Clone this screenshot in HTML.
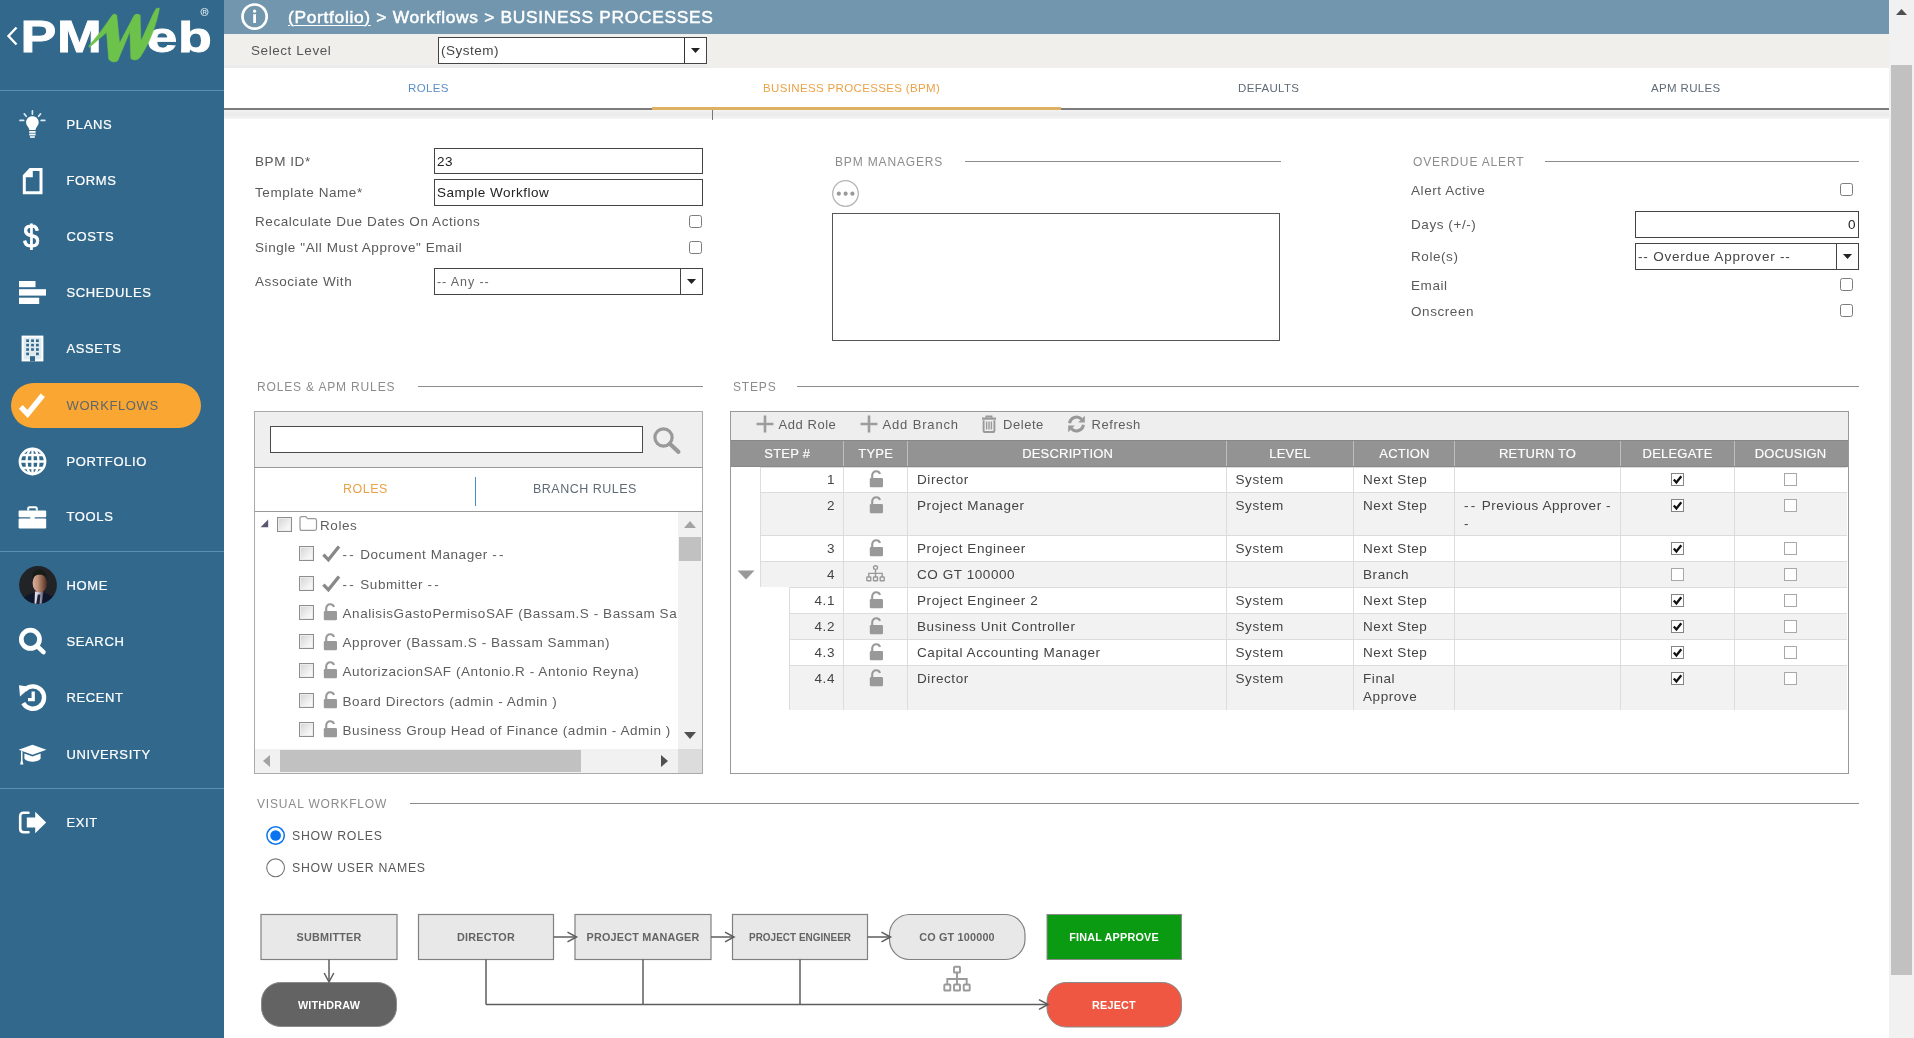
<!DOCTYPE html>
<html lang="en">
<head>
<meta charset="utf-8">
<title>PMWeb - Business Processes</title>
<style>
*{box-sizing:border-box;margin:0;padding:0}
html,body{width:1914px;height:1038px;overflow:hidden;background:#fff}
body{position:relative;will-change:transform;opacity:.9999;font-family:"Liberation Sans",Arial,sans-serif;font-size:13px;color:#555;letter-spacing:.55px}
.abs{position:absolute}
/* ---------- sidebar ---------- */
#side{position:absolute;left:0;top:0;width:224px;height:1038px;background:#31688b}
#side .sep{position:absolute;left:0;width:224px;height:1px;background:#5c8fb0}
#side .it{position:absolute;left:66.5px;color:#fff;font-size:13px;letter-spacing:.62px;-webkit-text-stroke:.22px currentColor;line-height:16px;white-space:nowrap}
#side svg{position:absolute;overflow:visible}
#pill{position:absolute;left:11px;top:383px;width:190px;height:45px;border-radius:23px;background:#f9a632}
/* ---------- top ---------- */
#hdr{position:absolute;left:224px;top:0;width:1665px;height:34px;background:#7196ad}
#crumb{position:absolute;left:64px;top:7px;font-size:15.8px;line-height:22px;color:#fff;letter-spacing:.62px;white-space:nowrap;-webkit-text-stroke:.45px #fff;transform:scaleX(1.1);transform-origin:0 50%}
#crumb u{text-decoration-thickness:1px;text-underline-offset:2px}
#lvl{position:absolute;left:224px;top:34px;width:1665px;height:34px;background:#f1efec}
#tabs{position:absolute;left:224px;top:68px;width:1665px;height:42px;background:#fff;border-bottom:2px solid #7d7d7d}
#tabs span{position:absolute;top:13px;font-size:11.5px;letter-spacing:.35px;line-height:14px;white-space:nowrap}
#strip{position:absolute;left:224px;top:110px;width:1665px;height:9px;background:linear-gradient(#f3f3f3,#eaeaea 45%,#f4f4f4)}
#vsb{position:absolute;left:1889px;top:0;width:25px;height:1038px;background:#f1f1f1}
#vsb i{position:absolute;left:2px;top:65px;width:21px;height:910px;background:#c1c1c1}
.lbl{position:absolute;white-space:nowrap;line-height:16px;font-size:13.5px;letter-spacing:.57px;color:#5a5a5a}
.inp{position:absolute;border:1px solid #444;background:#fff;height:27px;font-size:13.5px;letter-spacing:.5px;color:#222;line-height:25px;padding-left:2px;white-space:nowrap}
.cb{position:absolute;width:13px;height:13px;border:1px solid #7c7c7c;border-radius:2.5px;background:#fff}
.sec{position:absolute;font-size:12px;letter-spacing:.84px;color:#8c8c8c;white-space:nowrap;line-height:14px}
.hl{position:absolute;height:1px;background:#8c8c8c}
.ptab{font-size:12.5px;letter-spacing:.5px;line-height:16px;white-space:nowrap}
.tcb{position:absolute;width:15px;height:15px;border:1px solid #8e8e8e;background:linear-gradient(135deg,#d4d4d4 0%,#f6f6f6 75%);box-shadow:inset 0 0 0 1px #ececec}
.tl{font-size:13.5px;letter-spacing:.57px;color:#5e5e5e;line-height:16px;white-space:nowrap}
.dd{letter-spacing:2.2px}
.tb{font-size:13px;letter-spacing:.55px;color:#5e5e5e;line-height:16px;white-space:nowrap}
.th{font-size:13px;letter-spacing:.2px;color:#fff;line-height:16px;text-align:center;white-space:nowrap;-webkit-text-stroke:.15px #fff}
.td{font-size:13.5px;letter-spacing:.57px;color:#444;line-height:18px;white-space:nowrap}
.gcb{width:13px;height:13px;border:1px solid #a8a8a8;background:#fff}
.dd2{letter-spacing:2.2px}
.rl{font-size:12.3px;letter-spacing:.72px;color:#585858;line-height:16px;white-space:nowrap}
</style>
</head>
<body>

<!-- ================= SIDEBAR ================= -->
<div id="side">
  <div class="sep" style="top:90px"></div>
  <div class="sep" style="top:551px"></div>
  <div class="sep" style="top:788px"></div>
  <div id="pill"></div>
  <div class="it" style="top:117px">PLANS</div>
  <div class="it" style="top:173px">FORMS</div>
  <div class="it" style="top:229px">COSTS</div>
  <div class="it" style="top:285px">SCHEDULES</div>
  <div class="it" style="top:341px">ASSETS</div>
  <div class="it" style="top:398px;color:#5d666d;-webkit-text-stroke:0">WORKFLOWS</div>
  <div class="it" style="top:454px">PORTFOLIO</div>
  <div class="it" style="top:509px">TOOLS</div>
  <div class="it" style="top:578px">HOME</div>
  <div class="it" style="top:634px">SEARCH</div>
  <div class="it" style="top:690px">RECENT</div>
  <div class="it" style="top:747px">UNIVERSITY</div>
  <div class="it" style="top:815px">EXIT</div>
<!--SI0-->
  <!-- logo -->
  <svg style="left:0;top:0" width="224" height="90" viewBox="0 0 224 90">
    <path d="M16.500 27.500 8.500 36l8 8.500" fill="none" stroke="#fff" stroke-width="2.400"/>
    <text x="20.500" y="52" font-family="Liberation Sans, Arial, sans-serif" font-weight="bold" font-size="43.500" fill="#fff" stroke="#fff" stroke-width=".8" textLength="82" lengthAdjust="spacingAndGlyphs">PM</text>
    <text x="146.500" y="52" font-family="Liberation Sans, Arial, sans-serif" font-weight="bold" font-size="42" fill="#fff" stroke="#fff" stroke-width=".9" textLength="66" lengthAdjust="spacingAndGlyphs">eb</text>
    <path d="M89.400 47.400 88.800 45.900Q100.800 32.500 112.200 15.300Q114.500 12.800 116.800 15.300L119.600 43 134.200 15.300Q137.300 12.800 140.200 15.300L141 41 153.300 13.500 156.200 8.400 159.500 8.100C157 23 150 43 140 57.500Q135.500 62 130.800 58.500L129.900 31.500 117.800 60.700Q112.400 64 108.700 59.300L106.600 32.400z" fill="#6cc24a" stroke="#6cc24a" stroke-width=".5" stroke-linejoin="round"/>
    <circle cx="204.500" cy="12" r="3.600" fill="none" stroke="#cfe0ea" stroke-width="1"/>
    <text x="202.600" y="14.200" font-family="Liberation Sans, Arial, sans-serif" font-weight="bold" font-size="6" fill="#cfe0ea">R</text>
  </svg>
  <!-- plans : bulb -->
  <svg style="left:19px;top:110px" width="27" height="29" viewBox="0 0 27 29" fill="#fff">
    <path d="M13.4 6.2c-3.7 0-6.3 2.7-6.3 6 0 2.2 1.1 3.6 2 4.8.7 1 1.1 1.8 1.2 3h6.2c.1-1.2.5-2 1.2-3 .9-1.2 2-2.6 2-4.8 0-3.3-2.600-6-6.300-6z"/>
    <rect x="10.200" y="21" width="6.400" height="1.800"/><rect x="10.200" y="23.600" width="6.400" height="1.800"/><rect x="11" y="26.200" width="4.800" height="1.600"/>
    <g stroke="#dcebf5" stroke-width="1.700" stroke-linecap="round"><path d="M13.4 .9v3.200M5.200 3.800l2 2.500M21.600 3.800l-2 2.500M1 10.400h3.600M22.200 10.400h3.600"/></g>
  </svg>
  <!-- forms : document -->
  <svg style="left:22px;top:168px" width="22" height="27" viewBox="0 0 22 27"><path fill-rule="evenodd" fill="#fff" d="M.8 7.300 7.600 0H20.500V26.300H.8zM10.800 3V9.200H3.800V23.300H17.500V3z"/></svg>
  <!-- costs : dollar -->
  <svg style="left:20px;top:218px" width="24" height="38" viewBox="0 0 24 38"><text x="0" y="0" transform="translate(11.600 29.300) scale(.9 1)" text-anchor="middle" font-family="Liberation Sans, Arial, sans-serif" font-size="32" fill="#fff" stroke="#fff" stroke-width=".9">$</text></svg>
  <!-- schedules : bars -->
  <svg style="left:19px;top:281px" width="27" height="23" viewBox="0 0 27 23" fill="#fff"><rect x="0" y="0" width="16.500" height="6.200"/><rect x="0" y="8.200" width="27" height="6.400"/><rect x="0" y="16.700" width="20.200" height="6.300"/></svg>
  <!-- assets : building -->
  <svg style="left:21px;top:335px" width="23" height="27" viewBox="0 0 23 27">
    <path d="M.6.600h21.800v25.800H.6z" fill="#fff"/><path d="M2.600 2.600h17.800v21.800H2.600z" fill="#dfe9f0"/>
    <g fill="#31688b"><rect x="5.2" y="4.4" width="2.800" height="2.600"/><rect x="10.1" y="4.4" width="2.800" height="2.600"/><rect x="15" y="4.4" width="2.800" height="2.600"/><rect x="5.2" y="8.8" width="2.800" height="2.600"/><rect x="10.1" y="8.8" width="2.800" height="2.600"/><rect x="15" y="8.8" width="2.800" height="2.600"/><rect x="5.2" y="13.2" width="2.800" height="2.600"/><rect x="10.1" y="13.2" width="2.800" height="2.600"/><rect x="15" y="13.2" width="2.800" height="2.600"/><rect x="5.2" y="17.6" width="2.800" height="2.600"/><rect x="15" y="17.6" width="2.800" height="2.600"/><rect x="9" y="21.200" width="5" height="5.200"/></g>
  </svg>
  <!-- workflows : check -->
  <svg style="left:18px;top:392px" width="28" height="27" viewBox="0 0 28 27"><path d="M2.800 14.800 9.600 22 24.800 3.200" fill="none" stroke="#fff" stroke-width="5.400" stroke-linejoin="miter"/></svg>
  <!-- portfolio : globe -->
  <svg style="left:18px;top:447px" width="29" height="29" viewBox="0 0 29 29" fill="none" stroke="#fff" stroke-width="2.300"><circle cx="14.500" cy="14.500" r="12.600" stroke-width="2.600"/><ellipse cx="14.500" cy="14.500" rx="6" ry="12.700"/><path d="M14.500 1.800v25.400M1.800 14.500h25.400M3.600 8h21.800M3.600 21h21.800"/></svg>
  <!-- tools : briefcase -->
  <svg style="left:18px;top:506px" width="29" height="23" viewBox="0 0 29 23"><path d="M10.200 4.500V2.600q0-1.400 1.400-1.400h5.800q1.400 0 1.400 1.400V4.500" fill="none" stroke="#fff" stroke-width="2"/><rect x=".6" y="4.400" width="27.600" height="6.800" rx="1" fill="#fff"/><rect x=".6" y="12.400" width="27.600" height="10" rx="1" fill="#fff"/><rect x="12.300" y="10.400" width="4.400" height="3.600" fill="#fff"/></svg>
  <!-- home : avatar -->
  <svg style="left:19px;top:566px" width="38" height="38" viewBox="0 0 38 38">
    <defs><clipPath id="avc"><circle cx="19" cy="19" r="18.900"/></clipPath>
    <linearGradient id="avf" x1="0" x2="1" y1="0" y2="0"><stop offset="0" stop-color="#d8b09a"/><stop offset=".35" stop-color="#c0917b"/><stop offset=".7" stop-color="#875947"/><stop offset="1" stop-color="#472c25"/></linearGradient><linearGradient id="avs" x1="0" x2="1" y1="0" y2="0"><stop offset="0" stop-color="#e4dfec"/><stop offset=".45" stop-color="#cfc9dc"/><stop offset="1" stop-color="#4d4b63"/></linearGradient>
    <filter id="avb" x="-10%" y="-10%" width="120%" height="120%"><feGaussianBlur stdDeviation=".7"/></filter></defs>
    <g clip-path="url(#avc)"><rect width="38" height="38" fill="#222327"/>
      <g filter="url(#avb)">
      <path d="M1 38C2 31 9 28.500 16 26.500L19 38zM21.500 38 24.500 26.500C31 28.500 36 31 37 38z" fill="#11152b"/>
      <path d="M16 25.500h8.500L22.800 38H15.500z" fill="url(#avs)"/>
      <path d="M18.800 28.500h2.600l-.8 9.500h-3.400z" fill="#1c2038"/>
      <ellipse cx="20.800" cy="17" rx="7.200" ry="9.400" fill="url(#avf)"/>
      <path d="M13.500 14.500C12.500 7 16 3.500 20.500 3.500S29 7 27.500 15C27 10.500 24.500 8.800 20.500 8.800S14.200 10.500 13.500 14.500z" fill="#171b19"/>
      </g>
    </g>
  </svg>
  <!-- search -->
  <svg style="left:18px;top:627px" width="29" height="29" viewBox="0 0 29 29"><circle cx="12.400" cy="12.300" r="9.100" fill="none" stroke="#fff" stroke-width="4.700"/><path d="M19.400 19.300 25.500 25.100" stroke="#fff" stroke-width="4.600" stroke-linecap="round"/></svg>
  <!-- recent -->
  <svg style="left:18px;top:682px" width="30" height="30" viewBox="0 0 30 30"><path d="M6.600 8A11.200 11.200 0 1 1 5.200 21.200" fill="none" stroke="#fff" stroke-width="4.400"/><path d="M1 3.200 12.800 5 2 14.400z" fill="#fff"/><path d="M15.200 9.600v8h-5.200" fill="none" stroke="#fff" stroke-width="3.300"/></svg>
  <!-- university -->
  <svg style="left:18px;top:744px" width="29" height="22" viewBox="0 0 29 22" fill="#fff"><path d="M14.500 .8 28.400 5.800 14.500 10.800 .6 5.800z"/><path d="M6.400 9.600v5.200c2 2.200 5 3 8.100 3s6.100-.8 8.100-3V9.600l-8.100 3z"/><path d="M3 7.200h1.500v9.300l.9 4H2.100l.9-4z"/></svg>
  <!-- exit -->
  <svg style="left:18px;top:810px" width="29" height="25" viewBox="0 0 29 25"><path d="M10.500 2.800H5.600Q2.200 2.800 2.200 6.200v12.600q0 3.400 3.400 3.400h4.900" fill="none" stroke="#fff" stroke-width="2.600" stroke-linecap="round"/><path d="M8.800 7.600h8.400V1.800L28.200 12.500 17.200 23.200v-5.800H8.800z" fill="#fff"/></svg>
<!--SI1-->
</div>

<!-- ================= HEADER ================= -->
<div id="hdr">
  <svg class="abs" style="left:16px;top:2px" width="29" height="29" viewBox="0 0 29 29"><circle cx="14.600" cy="14.600" r="12.100" fill="none" stroke="#fff" stroke-width="2.700"/><circle cx="14.600" cy="9.200" r="1.600" fill="#fff"/><rect x="13.200" y="12.200" width="2.800" height="8.800" fill="#fff"/></svg>
  <div id="crumb"><u>(Portfolio)</u> &gt; Workflows &gt; BUSINESS PROCESSES</div>
</div>
<div id="lvl">
  <div class="abs" style="left:0;top:30.500px;width:485px;height:3.500px;background:#ececec"></div>
  <div class="lbl" style="left:27px;top:9px;font-size:13.5px;color:#555">Select Level</div>
  <div class="inp" style="left:214px;top:3px;width:269px;height:27px;color:#444">(System)</div>
  <div class="abs" style="left:460px;top:4px;width:1px;height:25px;background:#333"></div>
  <svg class="abs" style="left:467px;top:14px" width="10" height="6"><path d="M0 0h9L4.5 5z" fill="#222"/></svg>
</div>
<div id="tabs">
  <span style="left:184px;color:#5b8fc9">ROLES</span>
  <span style="left:539px;color:#eba246">BUSINESS PROCESSES (BPM)</span>
  <span style="left:1014px;color:#5f6b76">DEFAULTS</span>
  <span style="left:1427px;color:#5f6b76">APM RULES</span>
  <div class="abs" style="left:428px;top:39px;width:409px;height:3px;background:#deb062"></div>
</div>
<div id="strip"><div class="abs" style="left:488px;top:0;width:1px;height:10px;background:#777"></div></div>
<div id="vsb"><i></i>
  <svg class="abs" style="left:7px;top:9px" width="11" height="6"><path d="M0 6h11L5.500 0z" fill="#505050"/></svg>
</div>

<!-- ================= FORM ================= -->
<div id="form">
  <div class="lbl" style="left:255px;top:154px">BPM ID*</div>
  <div class="inp" style="left:434px;top:148px;width:269px;height:26px">23</div>
  <div class="lbl" style="left:255px;top:185px">Template Name*</div>
  <div class="inp" style="left:434px;top:179px;width:269px;height:27px">Sample Workflow</div>
  <div class="lbl" style="left:255px;top:214px">Recalculate Due Dates On Actions</div>
  <div class="cb" style="left:689px;top:215px"></div>
  <div class="lbl" style="left:255px;top:240px">Single "All Must Approve" Email</div>
  <div class="cb" style="left:689px;top:241px"></div>
  <div class="lbl" style="left:255px;top:274px">Associate With</div>
  <div class="inp" style="left:434px;top:268px;width:269px;height:27px;font-size:12.500px;letter-spacing:.9px;color:#666;line-height:27px">-- Any --</div>
  <div class="abs" style="left:680px;top:269px;width:1px;height:25px;background:#444"></div>
  <svg class="abs" style="left:687px;top:279px" width="10" height="6"><path d="M0 0h9L4.500 5z" fill="#222"/></svg>

  <div class="sec" style="left:835px;top:155px">BPM MANAGERS</div>
  <div class="hl" style="left:965px;top:161px;width:316px"></div>
  <svg class="abs" style="left:831px;top:179px" width="29" height="29" viewBox="0 0 29 29"><circle cx="14.500" cy="14.500" r="12.800" fill="#fff" stroke="#b5b5b5" stroke-width="1.300"/><circle cx="7.800" cy="14.700" r="2.100" fill="#999"/><circle cx="14.600" cy="14.700" r="2.100" fill="#999"/><circle cx="21.400" cy="14.700" r="2.100" fill="#999"/></svg>
  <div class="abs" style="left:832px;top:213px;width:448px;height:128px;border:1px solid #555;background:#fff"></div>

  <div class="sec" style="left:1413px;top:155px">OVERDUE ALERT</div>
  <div class="hl" style="left:1545px;top:161px;width:314px"></div>
  <div class="lbl" style="left:1411px;top:183px">Alert Active</div>
  <div class="cb" style="left:1840px;top:183px"></div>
  <div class="lbl" style="left:1411px;top:217px">Days (+/-)</div>
  <div class="inp" style="left:1635px;top:211px;width:224px;height:27px;text-align:right;padding-right:2px">0</div>
  <div class="lbl" style="left:1411px;top:249px">Role(s)</div>
  <div class="inp" style="left:1635px;top:243px;width:224px;height:27px;color:#444;letter-spacing:.8px">-- Overdue Approver --</div>
  <div class="abs" style="left:1836px;top:244px;width:1px;height:25px;background:#444"></div>
  <svg class="abs" style="left:1843px;top:254px" width="10" height="6"><path d="M0 0h9L4.500 5z" fill="#222"/></svg>
  <div class="lbl" style="left:1411px;top:278px">Email</div>
  <div class="cb" style="left:1840px;top:278px"></div>
  <div class="lbl" style="left:1411px;top:304px">Onscreen</div>
  <div class="cb" style="left:1840px;top:304px"></div>

  <div class="sec" style="left:257px;top:380px">ROLES &amp; APM RULES</div>
  <div class="hl" style="left:418px;top:386px;width:285px"></div>
  <div class="sec" style="left:733px;top:380px">STEPS</div>
  <div class="hl" style="left:797px;top:386px;width:1062px"></div>
</div>
<!-- ================= ROLES PANEL ================= -->
<div id="rp" class="abs" style="left:254px;top:411px;width:449px;height:363px;border:1px solid #aaa;background:#fff">
 <div class="abs" style="left:0;top:0;width:447px;height:56px;background:#efefef;border-bottom:1px solid #999"></div>
 <div class="abs" style="left:15px;top:14px;width:373px;height:27px;border:1px solid #4a4a4a;background:#fff"></div>
 <svg class="abs" style="left:397px;top:14px" width="30" height="28" viewBox="0 0 30 28"><circle cx="11.500" cy="11.500" r="8.600" fill="none" stroke="#999" stroke-width="3.200"/><path d="M17.800 17.800 26.300 25.800" stroke="#999" stroke-width="4.200" stroke-linecap="round"/></svg>
 <div class="abs" style="left:0;top:99px;width:447px;height:1px;background:#999"></div>
 <div class="abs ptab" style="left:88px;top:69px;color:#eba246">ROLES</div>
 <div class="abs" style="left:220px;top:65px;width:1px;height:29px;background:#4a90c2"></div>
 <div class="abs ptab" style="left:278px;top:69px;color:#5f6b76">BRANCH RULES</div>
 <div id="tree" class="abs" style="left:0;top:100px;width:423px;height:237px;overflow:hidden">
  <svg class="abs" style="left:5px;top:7px" width="9" height="9"><path d="M8.200 .6v7.600H.6z" fill="#5a5672"/></svg>
  <div class="tcb" style="left:22px;top:5px"></div>
  <svg class="abs" style="left:44px;top:3px" width="19" height="17" viewBox="0 0 19 16" preserveAspectRatio="none"><path d="M1 3.200q0-1.700 1.700-1.700h4.200l1.600 2h7.300q1.700 0 1.700 1.700v7.600q0 1.700-1.700 1.700H2.700q-1.700 0-1.700-1.700z" fill="#fff" stroke="#999" stroke-width="1.200"/></svg>
  <div class="abs tl" style="left:65px;top:6px">Roles</div>
  <div class="tcb" style="left:44px;top:34px"></div>
  <svg class="abs" style="left:67px;top:32px" width="19" height="19" viewBox="0 0 19 19"><path d="M1.400 10.600 6.400 15.800 17 2.400" fill="none" stroke="#888" stroke-width="3.300"/></svg>
  <div class="abs tl" style="left:87.5px;top:35px"><span class="dd">--</span> Document Manager <span class="dd">--</span></div>
  <div class="tcb" style="left:44px;top:64px"></div>
  <svg class="abs" style="left:67px;top:62px" width="19" height="19" viewBox="0 0 19 19"><path d="M1.400 10.600 6.400 15.800 17 2.400" fill="none" stroke="#888" stroke-width="3.300"/></svg>
  <div class="abs tl" style="left:87.5px;top:65px"><span class="dd">--</span> Submitter <span class="dd">--</span></div>
  <div class="tcb" style="left:44px;top:93px"></div>
  <svg class="abs" style="left:68px;top:91px" width="15" height="18" viewBox="0 0 15 18"><path d="M3.200 8.200V5.300C3.200 2.900 4.900 1.300 7.200 1.300c1.900 0 3.300 1 3.800 2.700" fill="none" stroke="#999" stroke-width="2.100"/><rect x=".8" y="8" width="13.200" height="9.200" rx="1.200" fill="#999"/></svg>
  <div class="abs tl" style="left:87.5px;top:94px">AnalisisGastoPermisoSAF (Bassam.S - Bassam Samman)</div>
  <div class="tcb" style="left:44px;top:122px"></div>
  <svg class="abs" style="left:68px;top:121px" width="15" height="18" viewBox="0 0 15 18"><path d="M3.200 8.200V5.300C3.200 2.900 4.900 1.300 7.200 1.300c1.900 0 3.300 1 3.800 2.700" fill="none" stroke="#999" stroke-width="2.100"/><rect x=".8" y="8" width="13.200" height="9.200" rx="1.200" fill="#999"/></svg>
  <div class="abs tl" style="left:87.5px;top:123px">Approver (Bassam.S - Bassam Samman)</div>
  <div class="tcb" style="left:44px;top:151px"></div>
  <svg class="abs" style="left:68px;top:149px" width="15" height="18" viewBox="0 0 15 18"><path d="M3.200 8.200V5.300C3.200 2.900 4.900 1.300 7.200 1.300c1.900 0 3.300 1 3.800 2.700" fill="none" stroke="#999" stroke-width="2.100"/><rect x=".8" y="8" width="13.200" height="9.200" rx="1.200" fill="#999"/></svg>
  <div class="abs tl" style="left:87.5px;top:152px">AutorizacionSAF (Antonio.R - Antonio Reyna)</div>
  <div class="tcb" style="left:44px;top:181px"></div>
  <svg class="abs" style="left:68px;top:179px" width="15" height="18" viewBox="0 0 15 18"><path d="M3.200 8.200V5.300C3.200 2.900 4.900 1.300 7.200 1.300c1.900 0 3.300 1 3.800 2.700" fill="none" stroke="#999" stroke-width="2.100"/><rect x=".8" y="8" width="13.200" height="9.200" rx="1.200" fill="#999"/></svg>
  <div class="abs tl" style="left:87.5px;top:182px">Board Directors (admin - Admin )</div>
  <div class="tcb" style="left:44px;top:210px"></div>
  <svg class="abs" style="left:68px;top:208px" width="15" height="18" viewBox="0 0 15 18"><path d="M3.200 8.200V5.300C3.200 2.900 4.900 1.300 7.200 1.300c1.900 0 3.300 1 3.800 2.700" fill="none" stroke="#999" stroke-width="2.100"/><rect x=".8" y="8" width="13.200" height="9.200" rx="1.200" fill="#999"/></svg>
  <div class="abs tl" style="left:87.5px;top:211px">Business Group Head of Finance (admin - Admin )</div>
 </div>
 <div class="abs" style="left:423px;top:100px;width:24px;height:237px;background:#f1f1f1"><div class="abs" style="left:1px;top:25px;width:22px;height:24px;background:#c1c1c1"></div><svg class="abs" style="left:6px;top:9px" width="12" height="7"><path d="M0 7h12L6 0z" fill="#a3a3a3"/></svg><svg class="abs" style="left:6px;top:220px" width="12" height="7"><path d="M0 0h12L6 7z" fill="#505050"/></svg></div>
 <div class="abs" style="left:0;top:337px;width:447px;height:24px;background:#f1f1f1"><div class="abs" style="left:25px;top:1px;width:301px;height:22px;background:#c1c1c1"></div><svg class="abs" style="left:8px;top:6px" width="7" height="12"><path d="M7 0v12L0 6z" fill="#a3a3a3"/></svg><svg class="abs" style="left:406px;top:6px" width="7" height="12"><path d="M0 0v12L7 6z" fill="#505050"/></svg><div class="abs" style="left:423px;top:0;width:24px;height:24px;background:#dcdcdc"></div></div>
</div>
<!-- ================= STEPS PANEL ================= -->
<div id="sp" class="abs" style="left:730px;top:411px;width:1119px;height:363px;border:1px solid #999;background:#fff">
 <div class="abs" style="left:0;top:0;width:1117px;height:29px;background:#eee"></div>
 <svg class="abs" style="left:25px;top:3px" width="18" height="18" viewBox="0 0 18 18"><path d="M9 .5v17M.5 9h17" stroke="#9c9c9c" stroke-width="2.600"/></svg><div class="abs tb" style="left:47.5px;top:5px">Add Role</div>
 <svg class="abs" style="left:129px;top:3px" width="18" height="18" viewBox="0 0 18 18"><path d="M9 .5v17M.5 9h17" stroke="#9c9c9c" stroke-width="2.600"/></svg><div class="abs tb" style="left:151.5px;top:5px;letter-spacing:.85px">Add Branch</div>
 <svg class="abs" style="left:250px;top:3px" width="16" height="18" viewBox="0 0 16 18" fill="none" stroke="#999"><path d="M1 3.600h14" stroke-width="2.200"/><path d="M5.400 3V1.400h5.200V3" stroke-width="1.700"/><path d="M2.600 5.200v10.200q0 1.600 1.600 1.600h7.600q1.600 0 1.600-1.600V5.200" stroke-width="1.900"/><path d="M5.600 6.600v8M8 6.600v8M10.400 6.600v8" stroke-width="1.400"/></svg><div class="abs tb" style="left:272px;top:5px">Delete</div>
 <svg class="abs" style="left:336px;top:3px" width="19" height="18" viewBox="0 0 19 18"><path d="M2.600 8.200A7 7 0 0 1 14.600 4.200" fill="none" stroke="#999" stroke-width="3.100"/><path d="M17.800 .8v6.600h-6.600z" fill="#999"/><path d="M16.400 9.800A7 7 0 0 1 4.400 13.800" fill="none" stroke="#999" stroke-width="3.100"/><path d="M1.200 17.200v-6.600h6.600z" fill="#999"/></svg><div class="abs tb" style="left:360.5px;top:5px">Refresh</div>
 <div class="abs" style="left:0;top:28px;width:1117px;height:27px;background:#939393;border-top:1px solid #888;border-bottom:1px solid #888"></div>
 <div class="abs" style="left:112px;top:29px;width:1px;height:25px;background:#bdbdbd"></div>
 <div class="abs" style="left:176px;top:29px;width:1px;height:25px;background:#bdbdbd"></div>
 <div class="abs" style="left:495px;top:29px;width:1px;height:25px;background:#bdbdbd"></div>
 <div class="abs" style="left:622px;top:29px;width:1px;height:25px;background:#bdbdbd"></div>
 <div class="abs" style="left:723px;top:29px;width:1px;height:25px;background:#bdbdbd"></div>
 <div class="abs" style="left:889px;top:29px;width:1px;height:25px;background:#bdbdbd"></div>
 <div class="abs" style="left:1003px;top:29px;width:1px;height:25px;background:#bdbdbd"></div>
 <div class="abs th" style="left:-43.799999999999955px;top:34px;width:200px">STEP #</div>
 <div class="abs th" style="left:44.700000000000045px;top:34px;width:200px">TYPE</div>
 <div class="abs th" style="left:236.70000000000005px;top:34px;width:200px">DESCRIPTION</div>
 <div class="abs th" style="left:459px;top:34px;width:200px">LEVEL</div>
 <div class="abs th" style="left:573.5px;top:34px;width:200px">ACTION</div>
 <div class="abs th" style="left:706.5999999999999px;top:34px;width:200px">RETURN TO</div>
 <div class="abs th" style="left:846.5999999999999px;top:34px;width:200px">DELEGATE</div>
 <div class="abs th" style="left:959.5999999999999px;top:34px;width:200px">DOCUSIGN</div>
 <div class="abs" style="left:29px;top:55px;width:1087px;height:25px;background:#fff;border-top:1px solid #dcdcdc;border-left:1px solid #dcdcdc"></div>
 <div class="abs" style="left:112px;top:55px;width:1px;height:25px;background:#dcdcdc"></div>
 <div class="abs" style="left:176px;top:55px;width:1px;height:25px;background:#dcdcdc"></div>
 <div class="abs" style="left:495px;top:55px;width:1px;height:25px;background:#dcdcdc"></div>
 <div class="abs" style="left:622px;top:55px;width:1px;height:25px;background:#dcdcdc"></div>
 <div class="abs" style="left:723px;top:55px;width:1px;height:25px;background:#dcdcdc"></div>
 <div class="abs" style="left:889px;top:55px;width:1px;height:25px;background:#dcdcdc"></div>
 <div class="abs" style="left:1003px;top:55px;width:1px;height:25px;background:#dcdcdc"></div>
 <div class="abs td" style="left:4px;top:59px;width:100px;text-align:right">1</div>
 <svg class="abs" style="left:138px;top:58px" width="15" height="18" viewBox="0 0 15 18"><path d="M3.200 8.200V5.300C3.200 2.900 4.900 1.300 7.200 1.300c1.900 0 3.300 1 3.800 2.700" fill="none" stroke="#999" stroke-width="2.100"/><rect x=".8" y="8" width="13.200" height="9.200" rx="1.200" fill="#999"/></svg>
 <div class="abs td" style="left:186px;top:59px">Director</div>
 <div class="abs td" style="left:504.5px;top:59px">System</div>
 <div class="abs td" style="left:632px;top:59px">Next Step</div>
 <svg class="abs" style="left:940px;top:61px" width="13" height="13" viewBox="0 0 13 13"><rect x=".5" y=".5" width="12" height="12" fill="#fff" stroke="#858585"/><path d="M2.800 6.500 5.400 9.400 10.300 3.200" fill="none" stroke="#111" stroke-width="2.300"/></svg>
 <div class="abs gcb" style="left:1053px;top:61px"></div>
 <div class="abs" style="left:29px;top:80px;width:1087px;height:43px;background:#f2f2f2;border-top:1px solid #dcdcdc;border-left:1px solid #dcdcdc"></div>
 <div class="abs" style="left:112px;top:80px;width:1px;height:43px;background:#dcdcdc"></div>
 <div class="abs" style="left:176px;top:80px;width:1px;height:43px;background:#dcdcdc"></div>
 <div class="abs" style="left:495px;top:80px;width:1px;height:43px;background:#dcdcdc"></div>
 <div class="abs" style="left:622px;top:80px;width:1px;height:43px;background:#dcdcdc"></div>
 <div class="abs" style="left:723px;top:80px;width:1px;height:43px;background:#dcdcdc"></div>
 <div class="abs" style="left:889px;top:80px;width:1px;height:43px;background:#dcdcdc"></div>
 <div class="abs" style="left:1003px;top:80px;width:1px;height:43px;background:#dcdcdc"></div>
 <div class="abs td" style="left:4px;top:85px;width:100px;text-align:right">2</div>
 <svg class="abs" style="left:138px;top:84px" width="15" height="18" viewBox="0 0 15 18"><path d="M3.200 8.200V5.300C3.200 2.900 4.900 1.300 7.200 1.300c1.900 0 3.300 1 3.800 2.700" fill="none" stroke="#999" stroke-width="2.100"/><rect x=".8" y="8" width="13.200" height="9.200" rx="1.200" fill="#999"/></svg>
 <div class="abs td" style="left:186px;top:85px">Project Manager</div>
 <div class="abs td" style="left:504.5px;top:85px">System</div>
 <div class="abs td" style="left:632px;top:85px">Next Step</div>
 <div class="abs td" style="left:733px;top:85px;width:152px;white-space:normal"><span class="dd2">--</span> Previous Approver <span class="dd2">--</span></div>
 <svg class="abs" style="left:940px;top:87px" width="13" height="13" viewBox="0 0 13 13"><rect x=".5" y=".5" width="12" height="12" fill="#fff" stroke="#858585"/><path d="M2.800 6.500 5.400 9.400 10.300 3.200" fill="none" stroke="#111" stroke-width="2.300"/></svg>
 <div class="abs gcb" style="left:1053px;top:87px"></div>
 <div class="abs" style="left:29px;top:123px;width:1087px;height:26px;background:#fff;border-top:1px solid #dcdcdc;border-left:1px solid #dcdcdc"></div>
 <div class="abs" style="left:112px;top:123px;width:1px;height:26px;background:#dcdcdc"></div>
 <div class="abs" style="left:176px;top:123px;width:1px;height:26px;background:#dcdcdc"></div>
 <div class="abs" style="left:495px;top:123px;width:1px;height:26px;background:#dcdcdc"></div>
 <div class="abs" style="left:622px;top:123px;width:1px;height:26px;background:#dcdcdc"></div>
 <div class="abs" style="left:723px;top:123px;width:1px;height:26px;background:#dcdcdc"></div>
 <div class="abs" style="left:889px;top:123px;width:1px;height:26px;background:#dcdcdc"></div>
 <div class="abs" style="left:1003px;top:123px;width:1px;height:26px;background:#dcdcdc"></div>
 <div class="abs td" style="left:4px;top:128px;width:100px;text-align:right">3</div>
 <svg class="abs" style="left:138px;top:127px" width="15" height="18" viewBox="0 0 15 18"><path d="M3.200 8.200V5.300C3.200 2.900 4.900 1.300 7.200 1.300c1.900 0 3.300 1 3.800 2.700" fill="none" stroke="#999" stroke-width="2.100"/><rect x=".8" y="8" width="13.200" height="9.200" rx="1.200" fill="#999"/></svg>
 <div class="abs td" style="left:186px;top:128px">Project Engineer</div>
 <div class="abs td" style="left:504.5px;top:128px">System</div>
 <div class="abs td" style="left:632px;top:128px">Next Step</div>
 <svg class="abs" style="left:940px;top:130px" width="13" height="13" viewBox="0 0 13 13"><rect x=".5" y=".5" width="12" height="12" fill="#fff" stroke="#858585"/><path d="M2.800 6.500 5.400 9.400 10.300 3.200" fill="none" stroke="#111" stroke-width="2.300"/></svg>
 <div class="abs gcb" style="left:1053px;top:130px"></div>
 <div class="abs" style="left:29px;top:149px;width:1087px;height:26px;background:#f2f2f2;border-top:1px solid #dcdcdc;border-left:1px solid #dcdcdc"></div>
 <div class="abs" style="left:112px;top:149px;width:1px;height:26px;background:#dcdcdc"></div>
 <div class="abs" style="left:176px;top:149px;width:1px;height:26px;background:#dcdcdc"></div>
 <div class="abs" style="left:495px;top:149px;width:1px;height:26px;background:#dcdcdc"></div>
 <div class="abs" style="left:622px;top:149px;width:1px;height:26px;background:#dcdcdc"></div>
 <div class="abs" style="left:723px;top:149px;width:1px;height:26px;background:#dcdcdc"></div>
 <div class="abs" style="left:889px;top:149px;width:1px;height:26px;background:#dcdcdc"></div>
 <div class="abs" style="left:1003px;top:149px;width:1px;height:26px;background:#dcdcdc"></div>
 <div class="abs td" style="left:4px;top:154px;width:100px;text-align:right">4</div>
 <svg class="abs" style="left:135px;top:153px" width="19" height="17" viewBox="0 0 19 17" fill="none" stroke="#999" stroke-width="1.400"><rect x="7.500" y=".8" width="4" height="3.600" rx="1.800"/><path d="M9.500 4.400v4M2.800 12V8.400h13.400V12M9.500 8.400V12"/><rect x=".8" y="12" width="4" height="3.800" rx=".6"/><rect x="7.500" y="12" width="4" height="3.800" rx=".6"/><rect x="14.200" y="12" width="4" height="3.800" rx=".6"/></svg>
 <div class="abs td" style="left:186px;top:154px">CO GT 100000</div>
 <div class="abs td" style="left:632px;top:154px">Branch</div>
 <div class="abs gcb" style="left:940px;top:156px"></div>
 <div class="abs gcb" style="left:1053px;top:156px"></div>
 <div class="abs" style="left:58px;top:175px;width:1058px;height:26px;background:#fff;border-top:1px solid #dcdcdc;border-left:1px solid #dcdcdc"></div>
 <div class="abs" style="left:112px;top:175px;width:1px;height:26px;background:#dcdcdc"></div>
 <div class="abs" style="left:176px;top:175px;width:1px;height:26px;background:#dcdcdc"></div>
 <div class="abs" style="left:495px;top:175px;width:1px;height:26px;background:#dcdcdc"></div>
 <div class="abs" style="left:622px;top:175px;width:1px;height:26px;background:#dcdcdc"></div>
 <div class="abs" style="left:723px;top:175px;width:1px;height:26px;background:#dcdcdc"></div>
 <div class="abs" style="left:889px;top:175px;width:1px;height:26px;background:#dcdcdc"></div>
 <div class="abs" style="left:1003px;top:175px;width:1px;height:26px;background:#dcdcdc"></div>
 <div class="abs td" style="left:4px;top:180px;width:100px;text-align:right">4.1</div>
 <svg class="abs" style="left:138px;top:179px" width="15" height="18" viewBox="0 0 15 18"><path d="M3.200 8.200V5.300C3.200 2.900 4.900 1.300 7.200 1.300c1.900 0 3.300 1 3.800 2.700" fill="none" stroke="#999" stroke-width="2.100"/><rect x=".8" y="8" width="13.200" height="9.200" rx="1.200" fill="#999"/></svg>
 <div class="abs td" style="left:186px;top:180px">Project Engineer 2</div>
 <div class="abs td" style="left:504.5px;top:180px">System</div>
 <div class="abs td" style="left:632px;top:180px">Next Step</div>
 <svg class="abs" style="left:940px;top:182px" width="13" height="13" viewBox="0 0 13 13"><rect x=".5" y=".5" width="12" height="12" fill="#fff" stroke="#858585"/><path d="M2.800 6.500 5.400 9.400 10.300 3.200" fill="none" stroke="#111" stroke-width="2.300"/></svg>
 <div class="abs gcb" style="left:1053px;top:182px"></div>
 <div class="abs" style="left:58px;top:201px;width:1058px;height:26px;background:#f2f2f2;border-top:1px solid #dcdcdc;border-left:1px solid #dcdcdc"></div>
 <div class="abs" style="left:112px;top:201px;width:1px;height:26px;background:#dcdcdc"></div>
 <div class="abs" style="left:176px;top:201px;width:1px;height:26px;background:#dcdcdc"></div>
 <div class="abs" style="left:495px;top:201px;width:1px;height:26px;background:#dcdcdc"></div>
 <div class="abs" style="left:622px;top:201px;width:1px;height:26px;background:#dcdcdc"></div>
 <div class="abs" style="left:723px;top:201px;width:1px;height:26px;background:#dcdcdc"></div>
 <div class="abs" style="left:889px;top:201px;width:1px;height:26px;background:#dcdcdc"></div>
 <div class="abs" style="left:1003px;top:201px;width:1px;height:26px;background:#dcdcdc"></div>
 <div class="abs td" style="left:4px;top:206px;width:100px;text-align:right">4.2</div>
 <svg class="abs" style="left:138px;top:205px" width="15" height="18" viewBox="0 0 15 18"><path d="M3.200 8.200V5.300C3.200 2.900 4.900 1.300 7.200 1.300c1.900 0 3.300 1 3.800 2.700" fill="none" stroke="#999" stroke-width="2.100"/><rect x=".8" y="8" width="13.200" height="9.200" rx="1.200" fill="#999"/></svg>
 <div class="abs td" style="left:186px;top:206px">Business Unit Controller</div>
 <div class="abs td" style="left:504.5px;top:206px">System</div>
 <div class="abs td" style="left:632px;top:206px">Next Step</div>
 <svg class="abs" style="left:940px;top:208px" width="13" height="13" viewBox="0 0 13 13"><rect x=".5" y=".5" width="12" height="12" fill="#fff" stroke="#858585"/><path d="M2.800 6.500 5.400 9.400 10.300 3.200" fill="none" stroke="#111" stroke-width="2.300"/></svg>
 <div class="abs gcb" style="left:1053px;top:208px"></div>
 <div class="abs" style="left:58px;top:227px;width:1058px;height:26px;background:#fff;border-top:1px solid #dcdcdc;border-left:1px solid #dcdcdc"></div>
 <div class="abs" style="left:112px;top:227px;width:1px;height:26px;background:#dcdcdc"></div>
 <div class="abs" style="left:176px;top:227px;width:1px;height:26px;background:#dcdcdc"></div>
 <div class="abs" style="left:495px;top:227px;width:1px;height:26px;background:#dcdcdc"></div>
 <div class="abs" style="left:622px;top:227px;width:1px;height:26px;background:#dcdcdc"></div>
 <div class="abs" style="left:723px;top:227px;width:1px;height:26px;background:#dcdcdc"></div>
 <div class="abs" style="left:889px;top:227px;width:1px;height:26px;background:#dcdcdc"></div>
 <div class="abs" style="left:1003px;top:227px;width:1px;height:26px;background:#dcdcdc"></div>
 <div class="abs td" style="left:4px;top:232px;width:100px;text-align:right">4.3</div>
 <svg class="abs" style="left:138px;top:231px" width="15" height="18" viewBox="0 0 15 18"><path d="M3.200 8.200V5.300C3.200 2.900 4.900 1.300 7.200 1.300c1.900 0 3.300 1 3.800 2.700" fill="none" stroke="#999" stroke-width="2.100"/><rect x=".8" y="8" width="13.200" height="9.200" rx="1.200" fill="#999"/></svg>
 <div class="abs td" style="left:186px;top:232px">Capital Accounting Manager</div>
 <div class="abs td" style="left:504.5px;top:232px">System</div>
 <div class="abs td" style="left:632px;top:232px">Next Step</div>
 <svg class="abs" style="left:940px;top:234px" width="13" height="13" viewBox="0 0 13 13"><rect x=".5" y=".5" width="12" height="12" fill="#fff" stroke="#858585"/><path d="M2.800 6.500 5.400 9.400 10.300 3.200" fill="none" stroke="#111" stroke-width="2.300"/></svg>
 <div class="abs gcb" style="left:1053px;top:234px"></div>
 <div class="abs" style="left:58px;top:253px;width:1058px;height:45px;background:#f2f2f2;border-top:1px solid #dcdcdc;border-left:1px solid #dcdcdc"></div>
 <div class="abs" style="left:112px;top:253px;width:1px;height:45px;background:#dcdcdc"></div>
 <div class="abs" style="left:176px;top:253px;width:1px;height:45px;background:#dcdcdc"></div>
 <div class="abs" style="left:495px;top:253px;width:1px;height:45px;background:#dcdcdc"></div>
 <div class="abs" style="left:622px;top:253px;width:1px;height:45px;background:#dcdcdc"></div>
 <div class="abs" style="left:723px;top:253px;width:1px;height:45px;background:#dcdcdc"></div>
 <div class="abs" style="left:889px;top:253px;width:1px;height:45px;background:#dcdcdc"></div>
 <div class="abs" style="left:1003px;top:253px;width:1px;height:45px;background:#dcdcdc"></div>
 <div class="abs td" style="left:4px;top:258px;width:100px;text-align:right">4.4</div>
 <svg class="abs" style="left:138px;top:257px" width="15" height="18" viewBox="0 0 15 18"><path d="M3.200 8.200V5.300C3.200 2.900 4.900 1.300 7.200 1.300c1.900 0 3.300 1 3.800 2.700" fill="none" stroke="#999" stroke-width="2.100"/><rect x=".8" y="8" width="13.200" height="9.200" rx="1.200" fill="#999"/></svg>
 <div class="abs td" style="left:186px;top:258px">Director</div>
 <div class="abs td" style="left:504.5px;top:258px">System</div>
 <div class="abs td" style="left:632px;top:258px">Final<br>Approve</div>
 <svg class="abs" style="left:940px;top:260px" width="13" height="13" viewBox="0 0 13 13"><rect x=".5" y=".5" width="12" height="12" fill="#fff" stroke="#858585"/><path d="M2.800 6.500 5.400 9.400 10.300 3.200" fill="none" stroke="#111" stroke-width="2.300"/></svg>
 <div class="abs gcb" style="left:1053px;top:260px"></div>
 <svg class="abs" style="left:6px;top:158px" width="18" height="10"><path d="M.5 .5h17L9 9.500z" fill="#999"/></svg>
</div>
<!-- ================= VISUAL WORKFLOW ================= -->
<div class="sec" style="left:257px;top:797px">VISUAL WORKFLOW</div>
<div class="hl" style="left:410px;top:803px;width:1449px"></div>
<svg class="abs" style="left:265px;top:825px" width="21" height="21" viewBox="0 0 21 21"><circle cx="10.600" cy="10.500" r="8.700" fill="#fff" stroke="#0a74f0" stroke-width="1.500"/><circle cx="10.600" cy="10.500" r="5.300" fill="#0a74f0"/></svg>
<div class="abs rl" style="left:292px;top:828px">SHOW ROLES</div>
<svg class="abs" style="left:265px;top:857px" width="21" height="21" viewBox="0 0 21 21"><circle cx="10.600" cy="10.800" r="8.900" fill="#fff" stroke="#767676" stroke-width="1.100"/></svg>
<div class="abs rl" style="left:292px;top:860px">SHOW USER NAMES</div>
<svg class="abs" style="left:250px;top:905px" width="960" height="130" viewBox="0 0 960 130" font-family="Liberation Sans, Arial, sans-serif" font-weight="bold" font-size="10.800" text-anchor="middle" letter-spacing=".2">

<rect x="11" y="9.5" width="136" height="45.0" fill="#e8e8e8" stroke="#808080" stroke-width="1.200"/>
<text x="79.0" y="36" fill="#646464">SUBMITTER</text>
<rect x="168.5" y="9.5" width="135.0" height="45.0" fill="#e8e8e8" stroke="#808080" stroke-width="1.200"/>
<text x="236.0" y="36" fill="#646464">DIRECTOR</text>
<rect x="325" y="9.5" width="136" height="45.0" fill="#e8e8e8" stroke="#808080" stroke-width="1.200"/>
<text x="393.0" y="36" fill="#646464">PROJECT MANAGER</text>
<rect x="482.5" y="9.5" width="135.0" height="45.0" fill="#e8e8e8" stroke="#808080" stroke-width="1.200"/>
<text x="550.0" y="36" fill="#646464" textLength="102" lengthAdjust="spacingAndGlyphs" letter-spacing="0">PROJECT ENGINEER</text>
<rect x="639.5" y="9.5" width="135.500" height="45" rx="20" fill="#e8e8e8" stroke="#808080" stroke-width="1.200"/><text x="707" y="36" fill="#646464">CO GT 100000</text>
<rect x="797" y="9.5" width="134.500" height="45" fill="#0a9b12" stroke="#8a8a8a" stroke-width="1"/><text x="864" y="36" fill="#fff">FINAL APPROVE</text>
<rect x="11.5" y="77.5" width="135" height="44" rx="19" fill="#636363" stroke="#8a8a8a" stroke-width="1"/><text x="79" y="103.5" fill="#fff">WITHDRAW</text>
<rect x="797" y="77.5" width="134.500" height="44.500" rx="19" fill="#ef5742" stroke="#8a8a8a" stroke-width="1"/><text x="864" y="103.5" fill="#fff">REJECT</text>
<g transform="translate(693.5 61)" fill="none" stroke="#9a9a9a" stroke-width="1.900"><g transform="scale(1 1.060)"><rect x="10.500" y=".8" width="6" height="5.400" rx=".8"/><path d="M13.500 6.200v6M3.800 17.500V12.200h19.400v5.300M13.500 12.200v5.300"/><rect x=".8" y="17.500" width="6" height="5.600" rx=".8"/><rect x="10.500" y="17.500" width="6" height="5.600" rx=".8"/><rect x="20.200" y="17.500" width="6" height="5.600" rx=".8"/></g></g>
<g fill="none" stroke="#5e5e5e" stroke-width="1.500">
<path d="M79 54.5V76"/><path d="M74.200 68L79 77L83.800 68"/>
<path d="M236 54.5V99.5"/>
<path d="M393 54.5V99.5"/>
<path d="M550 54.5V99.5"/>
<path d="M236 99.5H798"/><path d="M789 94.700L798 99.500L789 104.300"/>
<path d="M303.5 32H326.5"/><path d="M317.500 27.200L326.500 32L317.500 36.800"/>
<path d="M461 32H484"/><path d="M475 27.200L484 32L475 36.800"/>
<path d="M617.5 32H640.5"/><path d="M631.500 27.200L640.500 32L631.500 36.800"/>
</g>
</svg>
<!--MAIN5-->


</body>
</html>
